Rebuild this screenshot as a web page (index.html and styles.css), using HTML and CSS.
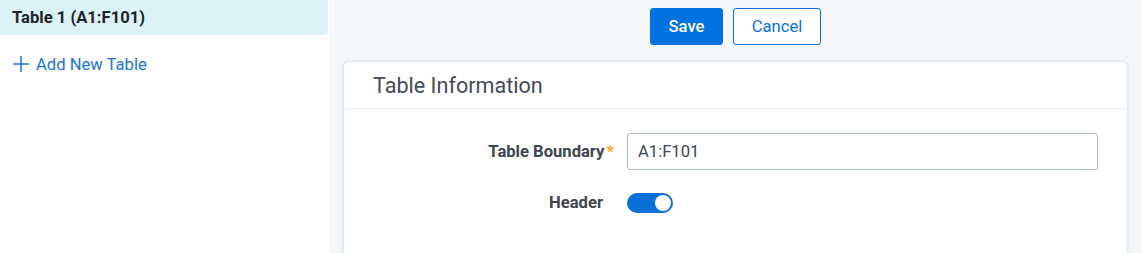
FILE: index.html
```
<!DOCTYPE html>
<html>
<head>
<meta charset="utf-8">
<link rel="stylesheet" href="styles.css">
</head>
<body>
<div class="app">
  <aside class="sidebar">
    <div class="table-item selected">Table 1 (A1:F101)</div>
    <div class="add-table">
      <svg class="plus" width="18" height="18" viewBox="0 0 18 18"><path d="M9 1V17M1 9H17" stroke="#1a73d8" stroke-width="1.5" fill="none"/></svg>
      <span>Add New Table</span>
    </div>
  </aside>
  <main class="main">
    <div class="toolbar">
      <button class="btn btn-primary">Save</button>
      <button class="btn btn-outline">Cancel</button>
    </div>
    <section class="card">
      <div class="card-header">Table Information</div>
      <div class="card-body">
        <div class="form-row">
          <label class="label">Table Boundary<span class="req">*</span></label>
          <div class="input">A1:F101</div>
        </div>
        <div class="form-row">
          <label class="label">Header</label>
          <div class="toggle"><div class="knob"></div></div>
        </div>
      </div>
    </section>
  </main>
</div>
</body>
</html>
```
FILE: styles.css
```
* { box-sizing: border-box; }
html, body { margin: 0; padding: 0; height: 100%; }
body {
  font-family: Roboto, "Liberation Sans", sans-serif;
  background: #fff;
  overflow: hidden;
}
.app { display: flex; height: 253px; }
.sidebar {
  width: 329px;
  flex: none;
  background: #fff;
}
.table-item {
  height: 35px;
  display: flex;
  align-items: center;
  padding-left: 12px;
  font-size: 16.6px;
  font-weight: 700;
  color: #1f2328;
  margin-right: 1px;
}
.table-item.selected {
  background: #dcf2f9;
  border-bottom-right-radius: 4px;
}
.add-table {
  display: flex;
  align-items: center;
  gap: 6px;
  padding-left: 12px;
  margin-top: 20px;
  height: 18px;
  color: #1a73d8;
  font-size: 16.6px;
}
.plus { flex: none; }
.main {
  flex: 1;
  background: #f3f7fa;
  padding: 8px 14px 0 14px;
  display: flex;
  flex-direction: column;
}
.toolbar {
  display: flex;
  justify-content: center;
  gap: 10px;
}
.btn {
  height: 37px;
  border-radius: 3px;
  font-family: Roboto, "Liberation Sans", sans-serif;
  font-size: 16.6px;
  padding: 0;
  cursor: pointer;
}
.btn-primary {
  width: 73px;
  background: #0073e0;
  border: 1px solid #0073e0;
  color: #fff;
  font-weight: 500;
}
.btn-outline {
  width: 88px;
  background: #fff;
  border: 1px solid #0b6fd6;
  color: #0b6fd6;
}
.card {
  margin-top: 16px;
  flex: 1;
  background: #fff;
  border: 1px solid #e1e7ef;
  border-bottom: none;
  border-radius: 5px 5px 0 0;
  box-shadow: 0 0 2px rgba(120, 140, 170, 0.25);
}
.card-header {
  height: 47px;
  display: flex;
  align-items: center;
  padding-left: 29px;
  font-size: 21.6px;
  color: #444b55;
  border-bottom: 1px solid #e2ebf3;
}
.card-body {
  padding: 24px 29px 0 0;
  display: flex;
  flex-direction: column;
  gap: 14px;
}
.form-row {
  display: grid;
  grid-template-columns: 259px 1fr;
  column-gap: 24px;
  align-items: center;
  min-height: 37px;
}
.label {
  text-align: right;
  font-size: 16.6px;
  font-weight: 700;
  color: #3d4550;
}
.req {
  color: #f5a623;
  margin-left: 2px;
  margin-right: -11px;
}
.input {
  height: 37px;
  border: 1px solid #abbbce;
  border-radius: 3px;
  padding-left: 10px;
  display: flex;
  align-items: center;
  font-size: 16.6px;
  color: #3d4550;
}
.toggle {
  width: 46px;
  height: 20px;
  border-radius: 10px;
  background: #0a70d8;
  display: flex;
  align-items: center;
  justify-content: flex-end;
  padding-right: 2px;
}
.knob {
  width: 16px;
  height: 16px;
  border-radius: 50%;
  background: #fff;
}
```
